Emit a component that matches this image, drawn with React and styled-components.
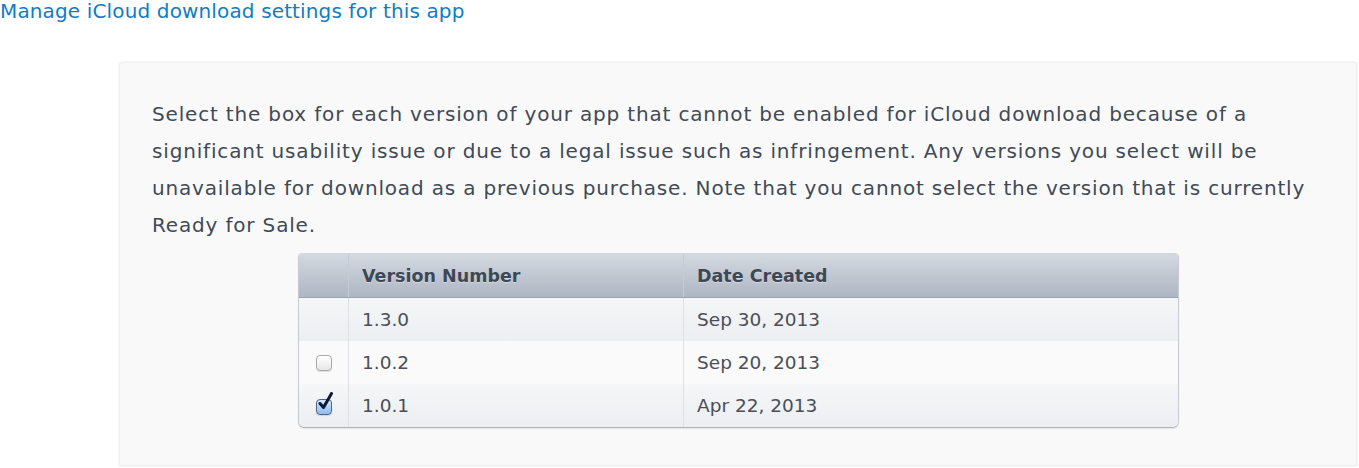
import React from "react";
import styled, { createGlobalStyle } from "styled-components";

const GlobalStyle = createGlobalStyle`
  body {
    margin: 0;
    background: #ffffff;
    font-family: "DejaVu Sans", Verdana, sans-serif;
  }
`;

const Page = styled.div`
  width: 1359px;
  height: 468px;
  overflow: hidden;
`;

const ManageLink = styled.a`
  display: block;
  height: 62px;
  margin: 0;
  font-size: 20px;
  line-height: 22px;
  letter-spacing: 0.14px;
  color: #0f7dc2;
  text-decoration: none;
`;

const Panel = styled.div`
  margin-left: 119px;
  margin-right: 2px;
  height: 404px;
  box-sizing: border-box;
  padding: 34px 33px 0 33px;
  background: #f9f9f9;
  border-radius: 4px 4px 0 0;
  box-shadow: 0 0 2px rgba(0, 0, 0, 0.12), inset 0 0 0 1px #f0f0f0;
`;

const Description = styled.p`
  margin: 0;
  font-size: 20px;
  line-height: 37px;
  letter-spacing: 0.83px;
  color: #404a56;
`;

const Table = styled.div`
  margin: 10px 0 0 147px;
  width: 879px;
  border-radius: 3px 3px 5px 5px;
  overflow: hidden;
  box-shadow: 0 1px 2px rgba(0, 0, 0, 0.25), 0 0 0 1px #d6d9df;
`;

const Row = styled.div`
  display: grid;
  grid-template-columns: 49px 335px 1fr;
  height: 43px;
  background: ${(p) =>
    p.$head
      ? "linear-gradient(#d4d9e1, #aeb6c3)"
      : p.$shade
      ? "linear-gradient(#f5f6f8, #eceef1)"
      : "#fafafa"};
  border-bottom: ${(p) => (p.$head ? "1px solid #9aa3b1" : "none")};
`;

const Cell = styled.div`
  display: flex;
  align-items: center;
  justify-content: ${(p) => (p.$center ? "center" : "flex-start")};
  padding-left: ${(p) => (p.$center ? "0" : "13px")};
  font-size: ${(p) => (p.$head ? "17.5px" : "18.5px")};
  font-weight: ${(p) => (p.$head ? "bold" : "normal")};
  color: ${(p) => (p.$head ? "#3e4755" : "#4a4f57")};
  text-shadow: ${(p) => (p.$head ? "0 1px 0 rgba(255,255,255,0.4)" : "none")};
  border-left: ${(p) =>
    p.$first ? "none" : p.$head ? "1px solid #c6ccd5" : "1px solid #dcdfe4"};
`;

const Box = styled.span`
  position: relative;
  display: inline-block;
  width: 16px;
  height: 16px;
  box-sizing: border-box;
  border-radius: 4px;
  border: 1px solid ${(p) => (p.$checked ? "#4f6488" : "#a9a9a9")};
  background: ${(p) =>
    p.$checked
      ? "linear-gradient(#d6e8fb, #8ebcee)"
      : "linear-gradient(#ffffff, #e6e6e6)"};
  box-shadow: 0 1px 1px rgba(0, 0, 0, 0.12);
  margin-top: ${(p) => (p.$checked ? "3px" : "0")};
`;

const Tick = styled.svg`
  position: absolute;
  left: 1px;
  top: -8px;
`;

const Checkbox = ({ checked }) => (
  <Box $checked={checked}>
    {checked && (
      <Tick width="16" height="20" viewBox="0 0 16 20">
        <path
          d="M2 11.5 L5.5 15.5 L13.5 1.5"
          fill="none"
          stroke="#0d1a33"
          strokeWidth="3"
          strokeLinecap="round"
          strokeLinejoin="round"
        />
      </Tick>
    )}
  </Box>
);

const versions = [
  { number: "1.3.0", date: "Sep 30, 2013", box: null },
  { number: "1.0.2", date: "Sep 20, 2013", box: false },
  { number: "1.0.1", date: "Apr 22, 2013", box: true },
];

const App = () => {
  return (
    <Page>
      <GlobalStyle />
      <ManageLink href="#">Manage iCloud download settings for this app</ManageLink>
      <Panel>
        <Description>
          Select the box for each version of your app that cannot be enabled for
          iCloud download because of a significant usability issue or due to a
          legal issue such as infringement. Any versions you select will be
          unavailable for download as a previous purchase. Note that you cannot
          select the version that is currently Ready for Sale.
        </Description>
        <Table>
          <Row $head>
            <Cell $head $first $center />
            <Cell $head>Version Number</Cell>
            <Cell $head>Date Created</Cell>
          </Row>
          {versions.map((v, i) => (
            <Row key={v.number} $shade={i % 2 === 0}>
              <Cell $first $center>
                {v.box !== null && <Checkbox checked={v.box} />}
              </Cell>
              <Cell>{v.number}</Cell>
              <Cell>{v.date}</Cell>
            </Row>
          ))}
        </Table>
      </Panel>
    </Page>
  );
};

export default App;
